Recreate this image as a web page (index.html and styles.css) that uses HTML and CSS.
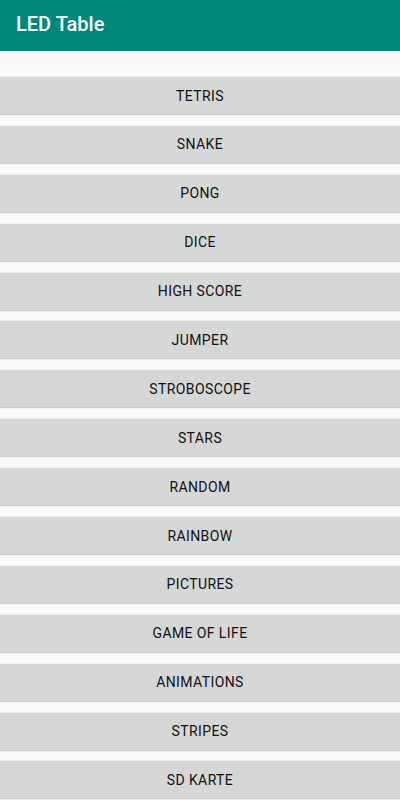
FILE: index.html
```html
<html>
	<head>
		<title>LED Table</title>
		<link rel="stylesheet" href="styles.css">
	</head>
	<body>
		<div class="toolbar">LED Table</div>
		<div class="menu">
			<a href="#" class="btn">Tetris</a>
			<a href="#" class="btn">Snake</a>
			<a href="#" class="btn">Pong</a>
			<a href="#" class="btn">Dice</a>
			<a href="#" class="btn">High Score</a>
			<a href="#" class="btn">Jumper</a>
			<a href="#" class="btn">Stroboscope</a>
			<a href="#" class="btn">Stars</a>
			<a href="#" class="btn">Random</a>
			<a href="#" class="btn">Rainbow</a>
			<a href="#" class="btn">Pictures</a>
			<a href="#" class="btn">Game of Life</a>
			<a href="#" class="btn">Animations</a>
			<a href="#" class="btn">Stripes</a>
			<a href="#" class="btn">SD Karte</a>
		</div>
	</body>
</html>
```

FILE: styles.css
```css
body {
	margin: 0px;
	padding: 0px;
	font-family: Roboto, "Noto Sans", sans-serif;
	background: #fafafa;
	overflow: hidden;
}

.toolbar {
	height: 51px;
	background: #00887a;
	color: #fff;
	font-size: 20px;
	font-weight: 500;
	padding-left: 16px;
	display: flex;
	align-items: center;
	box-sizing: border-box;
	padding-bottom: 4px;
}

.menu {
	display: flex;
	flex-direction: column;
	gap: 11.9px;
	padding-top: 26px;
}

.btn {
	display: flex;
	align-items: center;
	justify-content: center;
	height: 37px;
	background: #d6d7d7;
	color: #111;
	font-size: 14px;
	text-transform: uppercase;
	letter-spacing: 0.4px;
	text-decoration: none;
	box-shadow: 0 1px 1px rgba(0, 0, 0, 0.18), 0 -1px 1px rgba(0, 0, 0, 0.04);
}
```
